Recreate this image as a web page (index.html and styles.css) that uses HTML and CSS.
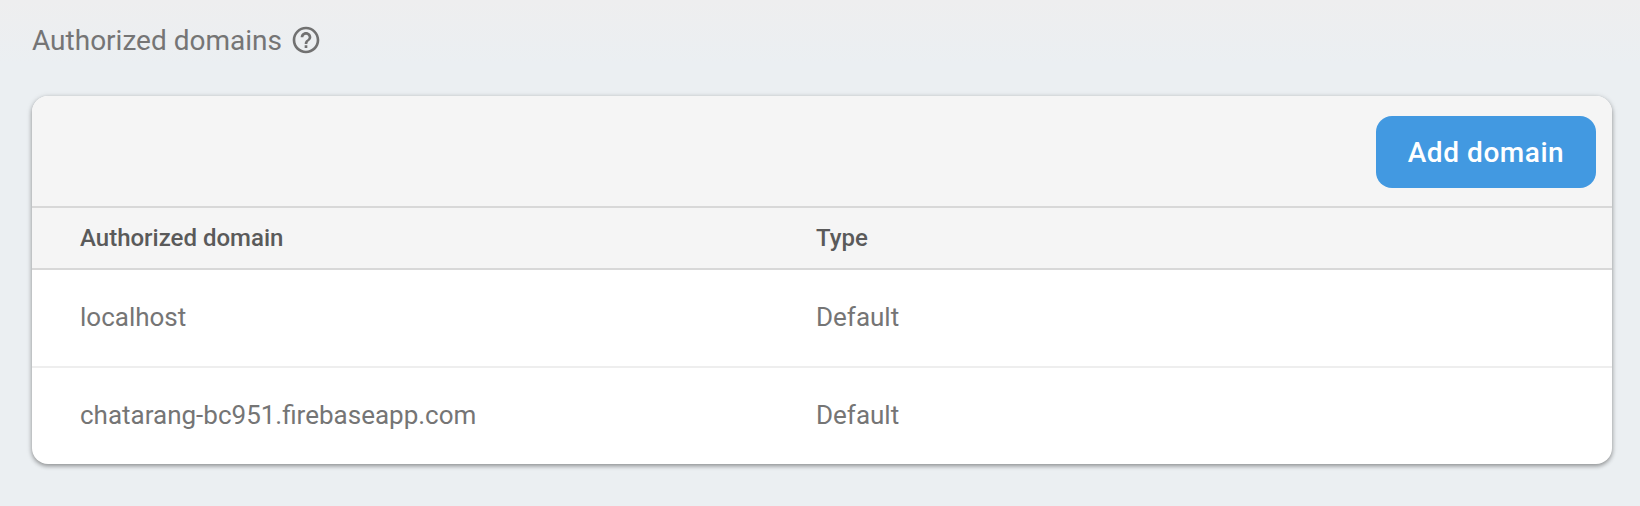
FILE: index.html
```html
<!DOCTYPE html>
<html lang="en">
<head>
<meta charset="utf-8">
<title>Authorized domains</title>
<link rel="stylesheet" href="styles.css">
</head>
<body>
<main class="page">
  <header class="heading">
    <h1 class="title">Authorized domains</h1>
    <svg class="help" viewBox="0 0 24 24" aria-hidden="true"><path d="M11 18h2v-2h-2v2zm1-16C6.48 2 2 6.48 2 12s4.480 10 10 10 10-4.480 10-10S17.520 2 12 2zm0 18c-4.410 0-8-3.590-8-8s3.590-8 8-8 8 3.590 8 8-3.590 8-8 8zm0-14c-2.210 0-4 1.790-4 4h2c0-1.100.9-2 2-2s2 .9 2 2c0 2-3 1.750-3 5h2c0-2.250 3-2.500 3-5 0-2.210-1.790-4-4-4z"/></svg>
  </header>
  <section class="card">
    <div class="toolbar"><button class="add">Add domain</button></div>
    <div class="row row-head"><span>Authorized domain</span><span>Type</span></div>
    <div class="row"><span>localhost</span><span>Default</span></div>
    <div class="row row-last"><span>chatarang-bc951.firebaseapp.com</span><span>Default</span></div>
  </section>
</main>
</body>
</html>
```
FILE: styles.css
```css
* { box-sizing: border-box; }
body {
  margin: 0;
  height: 506px;
  overflow: hidden;
  background: linear-gradient(#eeeeef 0, #ebeff2 64px);
  font-family: Roboto, sans-serif;
  color: #757575;
}
.page { padding: 0 28px 0 32px; }
.heading { display: flex; align-items: center; height: 96px; padding-bottom: 16px; }
.title { margin: 0; padding-top: 2px; font-size: 28px; font-weight: 400; line-height: 32px; }
.help { width: 32px; height: 32px; margin-left: 8px; fill: #717171; }
.card {
  height: 368px;
  border-radius: 16px;
  background: #fff;
  overflow: hidden;
  box-shadow: 0 2px 4px rgba(0, 0, 0, .32), 0 1px 6px rgba(0, 0, 0, .14);
}
.toolbar {
  display: flex;
  justify-content: flex-end;
  height: 112px;
  padding: 20px 16px;
  background: #f5f5f5;
  border-bottom: 2px solid #d8d8d8;
}
.add {
  width: 220px;
  height: 72px;
  padding: 0;
  border: 0;
  border-radius: 16px;
  background: #4299e1;
  color: #fff;
  font: 500 28px Roboto, sans-serif;
  letter-spacing: .56px;
}
.row {
  display: grid;
  grid-template-columns: 736px 1fr;
  align-items: center;
  height: 98px;
  padding: 0 0 2px 48px;
  font-size: 26px;
  border-bottom: 2px solid #eee;
}
.row-head {
  height: 62px;
  padding-bottom: 0;
  background: #f5f5f5;
  border-color: #d8d8d8;
  color: #5a5a5a;
  font-size: 24px;
  font-weight: 500;
}
.row-last { height: 96px; border-bottom: 0; }
```
